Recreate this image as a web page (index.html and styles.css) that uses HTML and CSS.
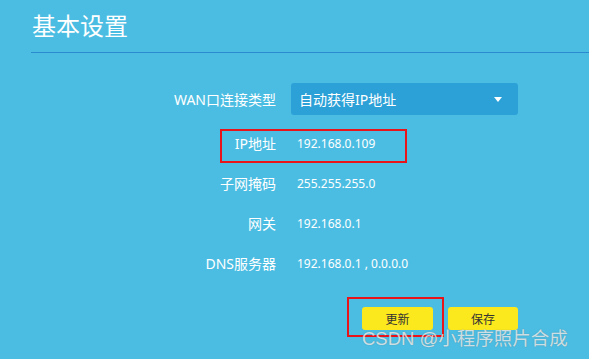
FILE: index.html
```html
<!DOCTYPE html>
<html lang="zh-CN">
<head>
    <meta charset="UTF-8">
    <meta name="viewport" content="width=device-width, initial-scale=1.0">
    <title>基本设置</title>
    <link rel="stylesheet" href="styles.css">
</head>
<body>
    <header class="page-head">
        <h1>基本设置</h1>
    </header>
    <main class="settings">
        <div class="label">WAN口连接类型</div>
        <div class="select">
            <span>自动获得IP地址</span>
            <span class="caret"></span>
        </div>

        <div class="label">IP地址</div>
        <div class="value">192.168.0.109</div>

        <div class="label">子网掩码</div>
        <div class="value">255.255.255.0</div>

        <div class="label">网关</div>
        <div class="value">192.168.0.1</div>

        <div class="label">DNS服务器</div>
        <div class="value">192.168.0.1 , 0.0.0.0</div>

        <div class="actions">
            <button type="button">更新</button>
            <button type="button">保存</button>
        </div>
    </main>

    <!-- 标注框 -->
    <div class="mark mark-ip"></div>
    <div class="mark mark-btn"></div>
    <div class="watermark">CSDN @小程序照片合成</div>
</body>
</html>
```

FILE: styles.css
```css
body {
    margin: 0;
    padding: 0;
    width: 589px;
    height: 359px;
    overflow: hidden;
    position: relative;
    background-color: #4bbde2;
    color: white;
    font-family: "Noto Sans", "Noto Sans CJK SC", sans-serif;
}

.page-head {
    margin-left: 31px;
    padding: 10px 0 10px 1px;
    border-bottom: 1px solid #2a8bd0;
}

.page-head h1 {
    margin: 0;
    font-size: 24px;
    line-height: 32px;
    font-weight: normal;
}

.settings {
    display: grid;
    grid-template-columns: 276px 227px;
    grid-template-rows: 48px repeat(4, 40px) auto;
    column-gap: 15px;
    align-items: center;
    margin-top: 22px;
}

.label {
    text-align: right;
    font-size: 14px;
}

.value {
    padding-left: 6px;
    font-size: 12px;
}

.select {
    height: 32px;
    display: flex;
    align-items: center;
    justify-content: space-between;
    padding: 0 16px 0 8px;
    background-color: #2ca1d7;
    border-radius: 3px;
    font-size: 14px;
}

.caret {
    width: 0;
    height: 0;
    border-left: 4.5px solid transparent;
    border-right: 4.5px solid transparent;
    border-top: 5px solid white;
    margin-top: 1px;
}

.actions {
    grid-column: 2;
    display: flex;
    justify-content: flex-end;
    gap: 15px;
    margin-top: 24px;
    align-self: start;
}

.actions button {
    width: 71px;
    height: 23px;
    border: none;
    border-radius: 3px;
    background-color: #fbe91d;
    color: #333;
    font-family: "Noto Sans CJK SC", sans-serif;
    font-size: 12px;
    padding: 0;
}

.actions button + button {
    width: 70px;
}

.mark {
    position: absolute;
    border: 2px solid #e8141a;
    box-sizing: border-box;
}

.mark-ip {
    left: 220px;
    top: 129px;
    width: 187px;
    height: 34px;
}

.mark-btn {
    left: 347px;
    top: 297px;
    width: 97px;
    height: 40px;
}

.watermark {
    position: absolute;
    left: 362px;
    top: 329px;
    font-family: "Liberation Sans", "Noto Sans CJK SC", sans-serif;
    font-size: 18.5px;
    line-height: 20px;
    color: rgba(255, 255, 255, 0.72);
    text-shadow: 0 0 1px rgba(80, 80, 80, 0.5);
    white-space: nowrap;
}
```
